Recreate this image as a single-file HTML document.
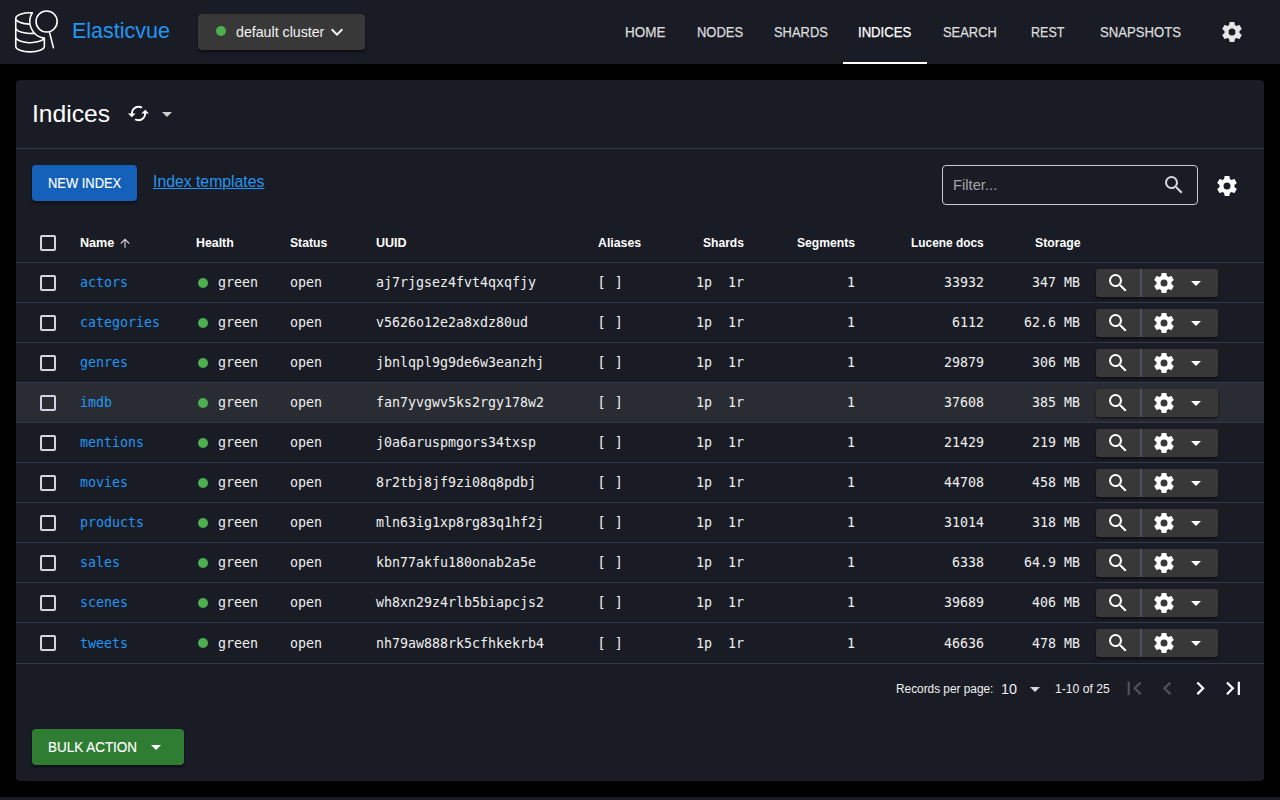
<!DOCTYPE html>
<html lang="en">
<head>
<meta charset="utf-8">
<title>Elasticvue</title>
<style>
*{box-sizing:border-box;margin:0;padding:0}
html,body{width:1280px;height:800px;overflow:hidden;background:#000;}
body{font-family:"Liberation Sans",sans-serif;color:#fff;position:relative;font-size:14px;}
svg{display:block}
.abs{position:absolute}
.tx{position:absolute;white-space:nowrap;transform-origin:0 50%}
.mono{font-family:"DejaVu Sans Mono","Liberation Mono",monospace;font-size:13.3px;}
#bar{position:absolute;left:0;top:0;width:1280px;height:64px;background:#1a1c25;}
#cluster{position:absolute;left:198px;top:14px;width:167px;height:36px;background:#383838;border-radius:4px;box-shadow:0 2px 3px rgba(0,0,0,.5);}
#cluster .dot{position:absolute;left:18px;top:12px;width:10px;height:10px;border-radius:50%;background:#4caf50}
#card{position:absolute;left:16px;top:80px;width:1248px;height:701px;background:#1a1c25;border-radius:4px;}
#footer{position:absolute;left:0;top:797px;width:1280px;height:3px;background:#1a1c25}
.hr{position:absolute;left:16px;width:1248px;height:1px;background:#32374a}
#newidx{position:absolute;left:32px;top:165px;width:105px;height:36px;background:#1561b9;border-radius:4px;box-shadow:0 2px 3px rgba(0,0,0,.5)}
#filter{position:absolute;left:942px;top:165px;width:256px;height:40px;border:1px solid #c6c9d9;border-radius:4px;}
.row{position:absolute;left:16px;width:1248px;height:40px;border-top:1px solid #32374a}
.row span{position:absolute;top:11px;line-height:18px;white-space:nowrap;color:#f0f0f0}
.row .nm{left:64px;color:#2196f3}
.row .hd{left:182px;top:14.5px;width:10px;height:10px;border-radius:50%;background:#4caf50}
.row .hl{left:202px}
.row .st{left:274px}
.row .uu{left:360px}
.row .al{left:581.5px;letter-spacing:0.6px}
.row .sh{right:520px;white-space:pre}
.row .sg{right:409px}
.row .ld{right:280px}
.row .sz{right:184px}
.row .cb{left:24px;top:12px;width:16px;height:16px;border:2px solid #d2d4e3;border-radius:2px}
.row .bt{left:1080px;top:6px;width:122px;height:28px;background:#383838;border-radius:3px;box-shadow:0 2px 3px rgba(0,0,0,.45)}
.row .bt i{position:absolute;left:44px;top:0;width:2px;height:28px;background:#4d5364}
.row .bt svg{position:absolute}
.hov{background:#2a2c34}
.last .nm,.last .hl,.last .st,.last .uu,.last .al,.last .sh,.last .sg,.last .ld,.last .sz{top:12px}
#bulk{position:absolute;left:32px;top:729px;width:152px;height:36px;background:#2e7d32;border-radius:4px;box-shadow:0 2px 3px rgba(0,0,0,.5)}
</style>
</head>
<body>
<div id="bar">
<svg class="abs" style="left:0;top:0" width="64" height="64" viewBox="0 0 64 64" fill="none" stroke="#fff" stroke-width="1.6" stroke-linecap="round" stroke-linejoin="round">
<path d="M30.01 24.10 A14.3 5.7 0 1 1 32.25 12.77 M32.25 12.77 A16.8 16.8 0 0 0 44.35 38.15 M15.75 27.70 A14.3 5.7 0 0 0 34.47 33.12 M15.75 37.00 A14.3 5.7 0 0 0 44.08 38.11 M15.75 18.40 V46.20 A14.3 5.7 0 0 0 44.35 46.20 V38.15"/>
<circle cx="46.6" cy="21.5" r="10.55"/>
<path d="M49.4 31.9 L53.4 47.6"/>
</svg>
<div class="tx" style="left:72.46px;top:16.58px;font-size:21.4px;line-height:28px;color:#2196f3;transform:scaleX(1.0046)">Elasticvue</div>
<div id="cluster"><div class="dot"></div><svg class="abs" style="left:127px;top:6px" width="24" height="24" viewBox="0 0 24 24" ><path fill="#f2f2f2" d="M7.41,8.58L12,13.17L16.59,8.58L18,10L12,16L6,10L7.41,8.58Z"/></svg></div>
<div class="tx" style="left:625.16px;top:23.15px;font-size:14px;line-height:18px;color:#dcdcde;-webkit-text-stroke:0.25px;transform:scaleX(0.9617)">HOME</div>
<div class="tx" style="left:696.69px;top:23.15px;font-size:14px;line-height:18px;color:#dcdcde;-webkit-text-stroke:0.25px;transform:scaleX(0.9256)">NODES</div>
<div class="tx" style="left:774.16px;top:23.15px;font-size:14px;line-height:18px;color:#dcdcde;-webkit-text-stroke:0.25px;transform:scaleX(0.9229)">SHARDS</div>
<div class="tx" style="left:857.52px;top:23.15px;font-size:14px;line-height:18px;color:#ffffff;-webkit-text-stroke:0.25px;transform:scaleX(0.9372)">INDICES</div>
<div class="tx" style="left:943.16px;top:23.15px;font-size:14px;line-height:18px;color:#dcdcde;-webkit-text-stroke:0.25px;transform:scaleX(0.9235)">SEARCH</div>
<div class="tx" style="left:1030.72px;top:23.15px;font-size:14px;line-height:18px;color:#dcdcde;-webkit-text-stroke:0.25px;transform:scaleX(0.8945)">REST</div>
<div class="tx" style="left:1100.14px;top:23.15px;font-size:14px;line-height:18px;color:#dcdcde;-webkit-text-stroke:0.25px;transform:scaleX(0.9378)">SNAPSHOTS</div>
<div class="tx" style="left:236.15px;top:23.15px;font-size:14.0px;line-height:18px;color:#f4f4f4;transform:scaleX(1.0133)">default cluster</div>
<div class="abs" style="left:843px;top:62px;width:84px;height:2px;background:#fff"></div>
<svg class="abs" style="left:1220px;top:20px" width="24" height="24" viewBox="0 0 24 24" ><path fill="#e6e6e6" d="M12,15.5A3.5,3.5 0 0,1 8.5,12A3.5,3.5 0 0,1 12,8.5A3.5,3.5 0 0,1 15.5,12A3.5,3.5 0 0,1 12,15.5M19.43,12.97C19.47,12.65 19.5,12.33 19.5,12C19.5,11.67 19.47,11.34 19.43,11L21.54,9.37C21.73,9.22 21.78,8.95 21.66,8.73L19.66,5.27C19.54,5.05 19.27,4.96 19.05,5.05L16.56,6.05C16.04,5.66 15.5,5.32 14.87,5.07L14.5,2.42C14.46,2.18 14.25,2 14,2H10C9.75,2 9.54,2.18 9.5,2.42L9.13,5.07C8.5,5.32 7.96,5.66 7.44,6.05L4.95,5.05C4.73,4.96 4.46,5.05 4.34,5.27L2.34,8.73C2.21,8.95 2.27,9.22 2.46,9.37L4.57,11C4.53,11.34 4.5,11.67 4.5,12C4.5,12.33 4.53,12.65 4.57,12.97L2.46,14.63C2.27,14.78 2.21,15.05 2.34,15.27L4.34,18.73C4.46,18.95 4.73,19.03 4.95,18.95L7.44,17.94C7.96,18.34 8.5,18.68 9.13,18.93L9.5,21.58C9.54,21.82 9.75,22 10,22H14C14.25,22 14.46,21.82 14.5,21.58L14.87,18.93C15.5,18.67 16.04,18.34 16.56,17.94L19.05,18.95C19.27,19.03 19.54,18.95 19.66,18.73L21.66,15.27C21.78,15.05 21.73,14.78 21.54,14.63L19.43,12.97Z"/></svg>
</div>
<div id="footer"></div>
<div id="card"></div>
<div class="tx" style="left:32.30px;top:98.89px;font-size:23.4px;line-height:30px;color:#ffffff;transform:scaleX(1.0540)">Indices</div>
<svg class="abs" style="left:126.7px;top:102.25px" width="23" height="23" viewBox="0 0 24 24" ><path fill="#fff" d="M19,8L15,12H18A6,6 0 0,1 12,18C11,18 10.03,17.75 9.2,17.3L7.74,18.76C8.97,19.54 10.43,20 12,20A8,8 0 0,0 20,12H23M6,12A6,6 0 0,1 12,6C13,6 13.97,6.25 14.8,6.7L16.26,5.24C15.03,4.46 13.57,4 12,4A8,8 0 0,0 4,12H1L5,16L9,12"/></svg>
<svg class="abs" style="left:155px;top:102px" width="24" height="24" viewBox="0 0 24 24" ><path fill="#cfcfd2" d="M7,10L12,15L17,10H7Z"/></svg>
<div class="hr" style="top:148px"></div>
<div id="newidx"></div>
<div class="tx" style="left:48.09px;top:174.15px;font-size:14px;line-height:18px;color:#ffffff;-webkit-text-stroke:0.15px;transform:scaleX(0.9229)">NEW INDEX</div>
<div class="tx" style="left:152.67px;top:170.96px;font-size:16px;line-height:21px;color:#2196f3;text-decoration:underline;transform:scaleX(0.9860)">Index templates</div>
<div id="filter"><svg class="abs" style="left:218.5px;top:6.5px" width="24" height="24" viewBox="0 0 24 24" ><path fill="#d8d8dc" d="M9.5,3A6.5,6.5 0 0,1 16,9.5C16,11.11 15.41,12.59 14.44,13.73L14.71,14H15.5L20.5,19L19,20.5L14,15.5V14.71L13.73,14.44C12.59,15.41 11.11,16 9.5,16A6.5,6.5 0 0,1 3,9.5A6.5,6.5 0 0,1 9.5,3M9.5,5C7,5 5,7 5,9.5C5,12 7,14 9.5,14C12,14 14,12 14,9.5C14,7 12,5 9.5,5Z"/></svg></div>
<svg class="abs" style="left:1215px;top:174px" width="24" height="24" viewBox="0 0 24 24" ><path fill="#fff" d="M12,15.5A3.5,3.5 0 0,1 8.5,12A3.5,3.5 0 0,1 12,8.5A3.5,3.5 0 0,1 15.5,12A3.5,3.5 0 0,1 12,15.5M19.43,12.97C19.47,12.65 19.5,12.33 19.5,12C19.5,11.67 19.47,11.34 19.43,11L21.54,9.37C21.73,9.22 21.78,8.95 21.66,8.73L19.66,5.27C19.54,5.05 19.27,4.96 19.05,5.05L16.56,6.05C16.04,5.66 15.5,5.32 14.87,5.07L14.5,2.42C14.46,2.18 14.25,2 14,2H10C9.75,2 9.54,2.18 9.5,2.42L9.13,5.07C8.5,5.32 7.96,5.66 7.44,6.05L4.95,5.05C4.73,4.96 4.46,5.05 4.34,5.27L2.34,8.73C2.21,8.95 2.27,9.22 2.46,9.37L4.57,11C4.53,11.34 4.5,11.67 4.5,12C4.5,12.33 4.53,12.65 4.57,12.97L2.46,14.63C2.27,14.78 2.21,15.05 2.34,15.27L4.34,18.73C4.46,18.95 4.73,19.03 4.95,18.95L7.44,17.94C7.96,18.34 8.5,18.68 9.13,18.93L9.5,21.58C9.54,21.82 9.75,22 10,22H14C14.25,22 14.46,21.82 14.5,21.58L14.87,18.93C15.5,18.67 16.04,18.34 16.56,17.94L19.05,18.95C19.27,19.03 19.54,18.95 19.66,18.73L21.66,15.27C21.78,15.05 21.73,14.78 21.54,14.63L19.43,12.97Z"/></svg>
<div class="tx" style="left:952.94px;top:176.15px;font-size:14.0px;line-height:18px;color:#a4a5aa;transform:scaleX(1.0536)">Filter...</div>
<div class="abs" style="left:40px;top:235px;width:16px;height:16px;border:2px solid #d2d4e3;border-radius:2px"></div>
<div class="tx" style="left:80.26px;top:234.84px;font-size:12px;line-height:16px;color:#ffffff;font-weight:bold;transform:scaleX(1.0502)">Name</div>
<div class="tx" style="left:195.64px;top:234.84px;font-size:12px;line-height:16px;color:#ffffff;font-weight:bold;transform:scaleX(1.0299)">Health</div>
<div class="tx" style="left:290.44px;top:234.84px;font-size:12px;line-height:16px;color:#ffffff;font-weight:bold;transform:scaleX(1.0137)">Status</div>
<div class="tx" style="left:376.01px;top:234.84px;font-size:12px;line-height:16px;color:#ffffff;font-weight:bold;transform:scaleX(1.0436)">UUID</div>
<div class="tx" style="left:598.32px;top:234.84px;font-size:12px;line-height:16px;color:#ffffff;font-weight:bold;transform:scaleX(1.0254)">Aliases</div>
<div class="tx" style="left:703.44px;top:234.84px;font-size:12px;line-height:16px;color:#ffffff;font-weight:bold;transform:scaleX(1.0066)">Shards</div>
<div class="tx" style="left:797.44px;top:234.84px;font-size:12px;line-height:16px;color:#ffffff;font-weight:bold;transform:scaleX(1.0116)">Segments</div>
<div class="tx" style="left:910.70px;top:234.84px;font-size:12px;line-height:16px;color:#ffffff;font-weight:bold;transform:scaleX(0.9906)">Lucene docs</div>
<div class="tx" style="left:1035.43px;top:234.84px;font-size:12px;line-height:16px;color:#ffffff;font-weight:bold;transform:scaleX(1.0207)">Storage</div>
<svg class="abs" style="left:118px;top:236px" width="14" height="14" viewBox="0 0 24 24" ><path fill="#d0d0d4" d="M13,20H11V8L5.5,13.5L4.08,12.08L12,4.16L19.92,12.08L18.5,13.5L13,8V20Z"/></svg>
<div class="row mono" style="top:262px"><span class="cb"></span><span class="nm">actors</span><span class="hd"></span><span class="hl">green</span><span class="st">open</span><span class="uu">aj7rjgsez4fvt4qxqfjy</span><span class="al">[ ]</span><span class="sh">1p  1r</span><span class="sg">1</span><span class="ld">33932</span><span class="sz">347 MB</span><span class="bt"><svg class="abs" style="left:10px;top:2px" width="24" height="24" viewBox="0 0 24 24" ><path fill="#fff" d="M9.5,3A6.5,6.5 0 0,1 16,9.5C16,11.11 15.41,12.59 14.44,13.73L14.71,14H15.5L20.5,19L19,20.5L14,15.5V14.71L13.73,14.44C12.59,15.41 11.11,16 9.5,16A6.5,6.5 0 0,1 3,9.5A6.5,6.5 0 0,1 9.5,3M9.5,5C7,5 5,7 5,9.5C5,12 7,14 9.5,14C12,14 14,12 14,9.5C14,7 12,5 9.5,5Z"/></svg><i></i><svg class="abs" style="left:56px;top:2px" width="24" height="24" viewBox="0 0 24 24" ><path fill="#fff" d="M12,15.5A3.5,3.5 0 0,1 8.5,12A3.5,3.5 0 0,1 12,8.5A3.5,3.5 0 0,1 15.5,12A3.5,3.5 0 0,1 12,15.5M19.43,12.97C19.47,12.65 19.5,12.33 19.5,12C19.5,11.67 19.47,11.34 19.43,11L21.54,9.37C21.73,9.22 21.78,8.95 21.66,8.73L19.66,5.27C19.54,5.05 19.27,4.96 19.05,5.05L16.56,6.05C16.04,5.66 15.5,5.32 14.87,5.07L14.5,2.42C14.46,2.18 14.25,2 14,2H10C9.75,2 9.54,2.18 9.5,2.42L9.13,5.07C8.5,5.32 7.96,5.66 7.44,6.05L4.95,5.05C4.73,4.96 4.46,5.05 4.34,5.27L2.34,8.73C2.21,8.95 2.27,9.22 2.46,9.37L4.57,11C4.53,11.34 4.5,11.67 4.5,12C4.5,12.33 4.53,12.65 4.57,12.97L2.46,14.63C2.27,14.78 2.21,15.05 2.34,15.27L4.34,18.73C4.46,18.95 4.73,19.03 4.95,18.95L7.44,17.94C7.96,18.34 8.5,18.68 9.13,18.93L9.5,21.58C9.54,21.82 9.75,22 10,22H14C14.25,22 14.46,21.82 14.5,21.58L14.87,18.93C15.5,18.67 16.04,18.34 16.56,17.94L19.05,18.95C19.27,19.03 19.54,18.95 19.66,18.73L21.66,15.27C21.78,15.05 21.73,14.78 21.54,14.63L19.43,12.97Z"/></svg><svg class="abs" style="left:88px;top:2px" width="24" height="24" viewBox="0 0 24 24" ><path fill="#fff" d="M7,10L12,15L17,10H7Z"/></svg></span></div>
<div class="row mono" style="top:302px"><span class="cb"></span><span class="nm">categories</span><span class="hd"></span><span class="hl">green</span><span class="st">open</span><span class="uu">v5626o12e2a8xdz80ud</span><span class="al">[ ]</span><span class="sh">1p  1r</span><span class="sg">1</span><span class="ld">6112</span><span class="sz">62.6 MB</span><span class="bt"><svg class="abs" style="left:10px;top:2px" width="24" height="24" viewBox="0 0 24 24" ><path fill="#fff" d="M9.5,3A6.5,6.5 0 0,1 16,9.5C16,11.11 15.41,12.59 14.44,13.73L14.71,14H15.5L20.5,19L19,20.5L14,15.5V14.71L13.73,14.44C12.59,15.41 11.11,16 9.5,16A6.5,6.5 0 0,1 3,9.5A6.5,6.5 0 0,1 9.5,3M9.5,5C7,5 5,7 5,9.5C5,12 7,14 9.5,14C12,14 14,12 14,9.5C14,7 12,5 9.5,5Z"/></svg><i></i><svg class="abs" style="left:56px;top:2px" width="24" height="24" viewBox="0 0 24 24" ><path fill="#fff" d="M12,15.5A3.5,3.5 0 0,1 8.5,12A3.5,3.5 0 0,1 12,8.5A3.5,3.5 0 0,1 15.5,12A3.5,3.5 0 0,1 12,15.5M19.43,12.97C19.47,12.65 19.5,12.33 19.5,12C19.5,11.67 19.47,11.34 19.43,11L21.54,9.37C21.73,9.22 21.78,8.95 21.66,8.73L19.66,5.27C19.54,5.05 19.27,4.96 19.05,5.05L16.56,6.05C16.04,5.66 15.5,5.32 14.87,5.07L14.5,2.42C14.46,2.18 14.25,2 14,2H10C9.75,2 9.54,2.18 9.5,2.42L9.13,5.07C8.5,5.32 7.96,5.66 7.44,6.05L4.95,5.05C4.73,4.96 4.46,5.05 4.34,5.27L2.34,8.73C2.21,8.95 2.27,9.22 2.46,9.37L4.57,11C4.53,11.34 4.5,11.67 4.5,12C4.5,12.33 4.53,12.65 4.57,12.97L2.46,14.63C2.27,14.78 2.21,15.05 2.34,15.27L4.34,18.73C4.46,18.95 4.73,19.03 4.95,18.95L7.44,17.94C7.96,18.34 8.5,18.68 9.13,18.93L9.5,21.58C9.54,21.82 9.75,22 10,22H14C14.25,22 14.46,21.82 14.5,21.58L14.87,18.93C15.5,18.67 16.04,18.34 16.56,17.94L19.05,18.95C19.27,19.03 19.54,18.95 19.66,18.73L21.66,15.27C21.78,15.05 21.73,14.78 21.54,14.63L19.43,12.97Z"/></svg><svg class="abs" style="left:88px;top:2px" width="24" height="24" viewBox="0 0 24 24" ><path fill="#fff" d="M7,10L12,15L17,10H7Z"/></svg></span></div>
<div class="row mono" style="top:342px"><span class="cb"></span><span class="nm">genres</span><span class="hd"></span><span class="hl">green</span><span class="st">open</span><span class="uu">jbnlqpl9g9de6w3eanzhj</span><span class="al">[ ]</span><span class="sh">1p  1r</span><span class="sg">1</span><span class="ld">29879</span><span class="sz">306 MB</span><span class="bt"><svg class="abs" style="left:10px;top:2px" width="24" height="24" viewBox="0 0 24 24" ><path fill="#fff" d="M9.5,3A6.5,6.5 0 0,1 16,9.5C16,11.11 15.41,12.59 14.44,13.73L14.71,14H15.5L20.5,19L19,20.5L14,15.5V14.71L13.73,14.44C12.59,15.41 11.11,16 9.5,16A6.5,6.5 0 0,1 3,9.5A6.5,6.5 0 0,1 9.5,3M9.5,5C7,5 5,7 5,9.5C5,12 7,14 9.5,14C12,14 14,12 14,9.5C14,7 12,5 9.5,5Z"/></svg><i></i><svg class="abs" style="left:56px;top:2px" width="24" height="24" viewBox="0 0 24 24" ><path fill="#fff" d="M12,15.5A3.5,3.5 0 0,1 8.5,12A3.5,3.5 0 0,1 12,8.5A3.5,3.5 0 0,1 15.5,12A3.5,3.5 0 0,1 12,15.5M19.43,12.97C19.47,12.65 19.5,12.33 19.5,12C19.5,11.67 19.47,11.34 19.43,11L21.54,9.37C21.73,9.22 21.78,8.95 21.66,8.73L19.66,5.27C19.54,5.05 19.27,4.96 19.05,5.05L16.56,6.05C16.04,5.66 15.5,5.32 14.87,5.07L14.5,2.42C14.46,2.18 14.25,2 14,2H10C9.75,2 9.54,2.18 9.5,2.42L9.13,5.07C8.5,5.32 7.96,5.66 7.44,6.05L4.95,5.05C4.73,4.96 4.46,5.05 4.34,5.27L2.34,8.73C2.21,8.95 2.27,9.22 2.46,9.37L4.57,11C4.53,11.34 4.5,11.67 4.5,12C4.5,12.33 4.53,12.65 4.57,12.97L2.46,14.63C2.27,14.78 2.21,15.05 2.34,15.27L4.34,18.73C4.46,18.95 4.73,19.03 4.95,18.95L7.44,17.94C7.96,18.34 8.5,18.68 9.13,18.93L9.5,21.58C9.54,21.82 9.75,22 10,22H14C14.25,22 14.46,21.82 14.5,21.58L14.87,18.93C15.5,18.67 16.04,18.34 16.56,17.94L19.05,18.95C19.27,19.03 19.54,18.95 19.66,18.73L21.66,15.27C21.78,15.05 21.73,14.78 21.54,14.63L19.43,12.97Z"/></svg><svg class="abs" style="left:88px;top:2px" width="24" height="24" viewBox="0 0 24 24" ><path fill="#fff" d="M7,10L12,15L17,10H7Z"/></svg></span></div>
<div class="row hov mono" style="top:382px"><span class="cb"></span><span class="nm">imdb</span><span class="hd"></span><span class="hl">green</span><span class="st">open</span><span class="uu">fan7yvgwv5ks2rgy178w2</span><span class="al">[ ]</span><span class="sh">1p  1r</span><span class="sg">1</span><span class="ld">37608</span><span class="sz">385 MB</span><span class="bt"><svg class="abs" style="left:10px;top:2px" width="24" height="24" viewBox="0 0 24 24" ><path fill="#fff" d="M9.5,3A6.5,6.5 0 0,1 16,9.5C16,11.11 15.41,12.59 14.44,13.73L14.71,14H15.5L20.5,19L19,20.5L14,15.5V14.71L13.73,14.44C12.59,15.41 11.11,16 9.5,16A6.5,6.5 0 0,1 3,9.5A6.5,6.5 0 0,1 9.5,3M9.5,5C7,5 5,7 5,9.5C5,12 7,14 9.5,14C12,14 14,12 14,9.5C14,7 12,5 9.5,5Z"/></svg><i></i><svg class="abs" style="left:56px;top:2px" width="24" height="24" viewBox="0 0 24 24" ><path fill="#fff" d="M12,15.5A3.5,3.5 0 0,1 8.5,12A3.5,3.5 0 0,1 12,8.5A3.5,3.5 0 0,1 15.5,12A3.5,3.5 0 0,1 12,15.5M19.43,12.97C19.47,12.65 19.5,12.33 19.5,12C19.5,11.67 19.47,11.34 19.43,11L21.54,9.37C21.73,9.22 21.78,8.95 21.66,8.73L19.66,5.27C19.54,5.05 19.27,4.96 19.05,5.05L16.56,6.05C16.04,5.66 15.5,5.32 14.87,5.07L14.5,2.42C14.46,2.18 14.25,2 14,2H10C9.75,2 9.54,2.18 9.5,2.42L9.13,5.07C8.5,5.32 7.96,5.66 7.44,6.05L4.95,5.05C4.73,4.96 4.46,5.05 4.34,5.27L2.34,8.73C2.21,8.95 2.27,9.22 2.46,9.37L4.57,11C4.53,11.34 4.5,11.67 4.5,12C4.5,12.33 4.53,12.65 4.57,12.97L2.46,14.63C2.27,14.78 2.21,15.05 2.34,15.27L4.34,18.73C4.46,18.95 4.73,19.03 4.95,18.95L7.44,17.94C7.96,18.34 8.5,18.68 9.13,18.93L9.5,21.58C9.54,21.82 9.75,22 10,22H14C14.25,22 14.46,21.82 14.5,21.58L14.87,18.93C15.5,18.67 16.04,18.34 16.56,17.94L19.05,18.95C19.27,19.03 19.54,18.95 19.66,18.73L21.66,15.27C21.78,15.05 21.73,14.78 21.54,14.63L19.43,12.97Z"/></svg><svg class="abs" style="left:88px;top:2px" width="24" height="24" viewBox="0 0 24 24" ><path fill="#fff" d="M7,10L12,15L17,10H7Z"/></svg></span></div>
<div class="row mono" style="top:422px"><span class="cb"></span><span class="nm">mentions</span><span class="hd"></span><span class="hl">green</span><span class="st">open</span><span class="uu">j0a6aruspmgors34txsp</span><span class="al">[ ]</span><span class="sh">1p  1r</span><span class="sg">1</span><span class="ld">21429</span><span class="sz">219 MB</span><span class="bt"><svg class="abs" style="left:10px;top:2px" width="24" height="24" viewBox="0 0 24 24" ><path fill="#fff" d="M9.5,3A6.5,6.5 0 0,1 16,9.5C16,11.11 15.41,12.59 14.44,13.73L14.71,14H15.5L20.5,19L19,20.5L14,15.5V14.71L13.73,14.44C12.59,15.41 11.11,16 9.5,16A6.5,6.5 0 0,1 3,9.5A6.5,6.5 0 0,1 9.5,3M9.5,5C7,5 5,7 5,9.5C5,12 7,14 9.5,14C12,14 14,12 14,9.5C14,7 12,5 9.5,5Z"/></svg><i></i><svg class="abs" style="left:56px;top:2px" width="24" height="24" viewBox="0 0 24 24" ><path fill="#fff" d="M12,15.5A3.5,3.5 0 0,1 8.5,12A3.5,3.5 0 0,1 12,8.5A3.5,3.5 0 0,1 15.5,12A3.5,3.5 0 0,1 12,15.5M19.43,12.97C19.47,12.65 19.5,12.33 19.5,12C19.5,11.67 19.47,11.34 19.43,11L21.54,9.37C21.73,9.22 21.78,8.95 21.66,8.73L19.66,5.27C19.54,5.05 19.27,4.96 19.05,5.05L16.56,6.05C16.04,5.66 15.5,5.32 14.87,5.07L14.5,2.42C14.46,2.18 14.25,2 14,2H10C9.75,2 9.54,2.18 9.5,2.42L9.13,5.07C8.5,5.32 7.96,5.66 7.44,6.05L4.95,5.05C4.73,4.96 4.46,5.05 4.34,5.27L2.34,8.73C2.21,8.95 2.27,9.22 2.46,9.37L4.57,11C4.53,11.34 4.5,11.67 4.5,12C4.5,12.33 4.53,12.65 4.57,12.97L2.46,14.63C2.27,14.78 2.21,15.05 2.34,15.27L4.34,18.73C4.46,18.95 4.73,19.03 4.95,18.95L7.44,17.94C7.96,18.34 8.5,18.68 9.13,18.93L9.5,21.58C9.54,21.82 9.75,22 10,22H14C14.25,22 14.46,21.82 14.5,21.58L14.87,18.93C15.5,18.67 16.04,18.34 16.56,17.94L19.05,18.95C19.27,19.03 19.54,18.95 19.66,18.73L21.66,15.27C21.78,15.05 21.73,14.78 21.54,14.63L19.43,12.97Z"/></svg><svg class="abs" style="left:88px;top:2px" width="24" height="24" viewBox="0 0 24 24" ><path fill="#fff" d="M7,10L12,15L17,10H7Z"/></svg></span></div>
<div class="row mono" style="top:462px"><span class="cb"></span><span class="nm">movies</span><span class="hd"></span><span class="hl">green</span><span class="st">open</span><span class="uu">8r2tbj8jf9zi08q8pdbj</span><span class="al">[ ]</span><span class="sh">1p  1r</span><span class="sg">1</span><span class="ld">44708</span><span class="sz">458 MB</span><span class="bt"><svg class="abs" style="left:10px;top:2px" width="24" height="24" viewBox="0 0 24 24" ><path fill="#fff" d="M9.5,3A6.5,6.5 0 0,1 16,9.5C16,11.11 15.41,12.59 14.44,13.73L14.71,14H15.5L20.5,19L19,20.5L14,15.5V14.71L13.73,14.44C12.59,15.41 11.11,16 9.5,16A6.5,6.5 0 0,1 3,9.5A6.5,6.5 0 0,1 9.5,3M9.5,5C7,5 5,7 5,9.5C5,12 7,14 9.5,14C12,14 14,12 14,9.5C14,7 12,5 9.5,5Z"/></svg><i></i><svg class="abs" style="left:56px;top:2px" width="24" height="24" viewBox="0 0 24 24" ><path fill="#fff" d="M12,15.5A3.5,3.5 0 0,1 8.5,12A3.5,3.5 0 0,1 12,8.5A3.5,3.5 0 0,1 15.5,12A3.5,3.5 0 0,1 12,15.5M19.43,12.97C19.47,12.65 19.5,12.33 19.5,12C19.5,11.67 19.47,11.34 19.43,11L21.54,9.37C21.73,9.22 21.78,8.95 21.66,8.73L19.66,5.27C19.54,5.05 19.27,4.96 19.05,5.05L16.56,6.05C16.04,5.66 15.5,5.32 14.87,5.07L14.5,2.42C14.46,2.18 14.25,2 14,2H10C9.75,2 9.54,2.18 9.5,2.42L9.13,5.07C8.5,5.32 7.96,5.66 7.44,6.05L4.95,5.05C4.73,4.96 4.46,5.05 4.34,5.27L2.34,8.73C2.21,8.95 2.27,9.22 2.46,9.37L4.57,11C4.53,11.34 4.5,11.67 4.5,12C4.5,12.33 4.53,12.65 4.57,12.97L2.46,14.63C2.27,14.78 2.21,15.05 2.34,15.27L4.34,18.73C4.46,18.95 4.73,19.03 4.95,18.95L7.44,17.94C7.96,18.34 8.5,18.68 9.13,18.93L9.5,21.58C9.54,21.82 9.75,22 10,22H14C14.25,22 14.46,21.82 14.5,21.58L14.87,18.93C15.5,18.67 16.04,18.34 16.56,17.94L19.05,18.95C19.27,19.03 19.54,18.95 19.66,18.73L21.66,15.27C21.78,15.05 21.73,14.78 21.54,14.63L19.43,12.97Z"/></svg><svg class="abs" style="left:88px;top:2px" width="24" height="24" viewBox="0 0 24 24" ><path fill="#fff" d="M7,10L12,15L17,10H7Z"/></svg></span></div>
<div class="row mono" style="top:502px"><span class="cb"></span><span class="nm">products</span><span class="hd"></span><span class="hl">green</span><span class="st">open</span><span class="uu">mln63ig1xp8rg83q1hf2j</span><span class="al">[ ]</span><span class="sh">1p  1r</span><span class="sg">1</span><span class="ld">31014</span><span class="sz">318 MB</span><span class="bt"><svg class="abs" style="left:10px;top:2px" width="24" height="24" viewBox="0 0 24 24" ><path fill="#fff" d="M9.5,3A6.5,6.5 0 0,1 16,9.5C16,11.11 15.41,12.59 14.44,13.73L14.71,14H15.5L20.5,19L19,20.5L14,15.5V14.71L13.73,14.44C12.59,15.41 11.11,16 9.5,16A6.5,6.5 0 0,1 3,9.5A6.5,6.5 0 0,1 9.5,3M9.5,5C7,5 5,7 5,9.5C5,12 7,14 9.5,14C12,14 14,12 14,9.5C14,7 12,5 9.5,5Z"/></svg><i></i><svg class="abs" style="left:56px;top:2px" width="24" height="24" viewBox="0 0 24 24" ><path fill="#fff" d="M12,15.5A3.5,3.5 0 0,1 8.5,12A3.5,3.5 0 0,1 12,8.5A3.5,3.5 0 0,1 15.5,12A3.5,3.5 0 0,1 12,15.5M19.43,12.97C19.47,12.65 19.5,12.33 19.5,12C19.5,11.67 19.47,11.34 19.43,11L21.54,9.37C21.73,9.22 21.78,8.95 21.66,8.73L19.66,5.27C19.54,5.05 19.27,4.96 19.05,5.05L16.56,6.05C16.04,5.66 15.5,5.32 14.87,5.07L14.5,2.42C14.46,2.18 14.25,2 14,2H10C9.75,2 9.54,2.18 9.5,2.42L9.13,5.07C8.5,5.32 7.96,5.66 7.44,6.05L4.95,5.05C4.73,4.96 4.46,5.05 4.34,5.27L2.34,8.73C2.21,8.95 2.27,9.22 2.46,9.37L4.57,11C4.53,11.34 4.5,11.67 4.5,12C4.5,12.33 4.53,12.65 4.57,12.97L2.46,14.63C2.27,14.78 2.21,15.05 2.34,15.27L4.34,18.73C4.46,18.95 4.73,19.03 4.95,18.95L7.44,17.94C7.96,18.34 8.5,18.68 9.13,18.93L9.5,21.58C9.54,21.82 9.75,22 10,22H14C14.25,22 14.46,21.82 14.5,21.58L14.87,18.93C15.5,18.67 16.04,18.34 16.56,17.94L19.05,18.95C19.27,19.03 19.54,18.95 19.66,18.73L21.66,15.27C21.78,15.05 21.73,14.78 21.54,14.63L19.43,12.97Z"/></svg><svg class="abs" style="left:88px;top:2px" width="24" height="24" viewBox="0 0 24 24" ><path fill="#fff" d="M7,10L12,15L17,10H7Z"/></svg></span></div>
<div class="row mono" style="top:542px"><span class="cb"></span><span class="nm">sales</span><span class="hd"></span><span class="hl">green</span><span class="st">open</span><span class="uu">kbn77akfu180onab2a5e</span><span class="al">[ ]</span><span class="sh">1p  1r</span><span class="sg">1</span><span class="ld">6338</span><span class="sz">64.9 MB</span><span class="bt"><svg class="abs" style="left:10px;top:2px" width="24" height="24" viewBox="0 0 24 24" ><path fill="#fff" d="M9.5,3A6.5,6.5 0 0,1 16,9.5C16,11.11 15.41,12.59 14.44,13.73L14.71,14H15.5L20.5,19L19,20.5L14,15.5V14.71L13.73,14.44C12.59,15.41 11.11,16 9.5,16A6.5,6.5 0 0,1 3,9.5A6.5,6.5 0 0,1 9.5,3M9.5,5C7,5 5,7 5,9.5C5,12 7,14 9.5,14C12,14 14,12 14,9.5C14,7 12,5 9.5,5Z"/></svg><i></i><svg class="abs" style="left:56px;top:2px" width="24" height="24" viewBox="0 0 24 24" ><path fill="#fff" d="M12,15.5A3.5,3.5 0 0,1 8.5,12A3.5,3.5 0 0,1 12,8.5A3.5,3.5 0 0,1 15.5,12A3.5,3.5 0 0,1 12,15.5M19.43,12.97C19.47,12.65 19.5,12.33 19.5,12C19.5,11.67 19.47,11.34 19.43,11L21.54,9.37C21.73,9.22 21.78,8.95 21.66,8.73L19.66,5.27C19.54,5.05 19.27,4.96 19.05,5.05L16.56,6.05C16.04,5.66 15.5,5.32 14.87,5.07L14.5,2.42C14.46,2.18 14.25,2 14,2H10C9.75,2 9.54,2.18 9.5,2.42L9.13,5.07C8.5,5.32 7.96,5.66 7.44,6.05L4.95,5.05C4.73,4.96 4.46,5.05 4.34,5.27L2.34,8.73C2.21,8.95 2.27,9.22 2.46,9.37L4.57,11C4.53,11.34 4.5,11.67 4.5,12C4.5,12.33 4.53,12.65 4.57,12.97L2.46,14.63C2.27,14.78 2.21,15.05 2.34,15.27L4.34,18.73C4.46,18.95 4.73,19.03 4.95,18.95L7.44,17.94C7.96,18.34 8.5,18.68 9.13,18.93L9.5,21.58C9.54,21.82 9.75,22 10,22H14C14.25,22 14.46,21.82 14.5,21.58L14.87,18.93C15.5,18.67 16.04,18.34 16.56,17.94L19.05,18.95C19.27,19.03 19.54,18.95 19.66,18.73L21.66,15.27C21.78,15.05 21.73,14.78 21.54,14.63L19.43,12.97Z"/></svg><svg class="abs" style="left:88px;top:2px" width="24" height="24" viewBox="0 0 24 24" ><path fill="#fff" d="M7,10L12,15L17,10H7Z"/></svg></span></div>
<div class="row mono" style="top:582px"><span class="cb"></span><span class="nm">scenes</span><span class="hd"></span><span class="hl">green</span><span class="st">open</span><span class="uu">wh8xn29z4rlb5biapcjs2</span><span class="al">[ ]</span><span class="sh">1p  1r</span><span class="sg">1</span><span class="ld">39689</span><span class="sz">406 MB</span><span class="bt"><svg class="abs" style="left:10px;top:2px" width="24" height="24" viewBox="0 0 24 24" ><path fill="#fff" d="M9.5,3A6.5,6.5 0 0,1 16,9.5C16,11.11 15.41,12.59 14.44,13.73L14.71,14H15.5L20.5,19L19,20.5L14,15.5V14.71L13.73,14.44C12.59,15.41 11.11,16 9.5,16A6.5,6.5 0 0,1 3,9.5A6.5,6.5 0 0,1 9.5,3M9.5,5C7,5 5,7 5,9.5C5,12 7,14 9.5,14C12,14 14,12 14,9.5C14,7 12,5 9.5,5Z"/></svg><i></i><svg class="abs" style="left:56px;top:2px" width="24" height="24" viewBox="0 0 24 24" ><path fill="#fff" d="M12,15.5A3.5,3.5 0 0,1 8.5,12A3.5,3.5 0 0,1 12,8.5A3.5,3.5 0 0,1 15.5,12A3.5,3.5 0 0,1 12,15.5M19.43,12.97C19.47,12.65 19.5,12.33 19.5,12C19.5,11.67 19.47,11.34 19.43,11L21.54,9.37C21.73,9.22 21.78,8.95 21.66,8.73L19.66,5.27C19.54,5.05 19.27,4.96 19.05,5.05L16.56,6.05C16.04,5.66 15.5,5.32 14.87,5.07L14.5,2.42C14.46,2.18 14.25,2 14,2H10C9.75,2 9.54,2.18 9.5,2.42L9.13,5.07C8.5,5.32 7.96,5.66 7.44,6.05L4.95,5.05C4.73,4.96 4.46,5.05 4.34,5.27L2.34,8.73C2.21,8.95 2.27,9.22 2.46,9.37L4.57,11C4.53,11.34 4.5,11.67 4.5,12C4.5,12.33 4.53,12.65 4.57,12.97L2.46,14.63C2.27,14.78 2.21,15.05 2.34,15.27L4.34,18.73C4.46,18.95 4.73,19.03 4.95,18.95L7.44,17.94C7.96,18.34 8.5,18.68 9.13,18.93L9.5,21.58C9.54,21.82 9.75,22 10,22H14C14.25,22 14.46,21.82 14.5,21.58L14.87,18.93C15.5,18.67 16.04,18.34 16.56,17.94L19.05,18.95C19.27,19.03 19.54,18.95 19.66,18.73L21.66,15.27C21.78,15.05 21.73,14.78 21.54,14.63L19.43,12.97Z"/></svg><svg class="abs" style="left:88px;top:2px" width="24" height="24" viewBox="0 0 24 24" ><path fill="#fff" d="M7,10L12,15L17,10H7Z"/></svg></span></div>
<div class="row last mono" style="top:622px"><span class="cb"></span><span class="nm">tweets</span><span class="hd"></span><span class="hl">green</span><span class="st">open</span><span class="uu">nh79aw888rk5cfhkekrb4</span><span class="al">[ ]</span><span class="sh">1p  1r</span><span class="sg">1</span><span class="ld">46636</span><span class="sz">478 MB</span><span class="bt"><svg class="abs" style="left:10px;top:2px" width="24" height="24" viewBox="0 0 24 24" ><path fill="#fff" d="M9.5,3A6.5,6.5 0 0,1 16,9.5C16,11.11 15.41,12.59 14.44,13.73L14.71,14H15.5L20.5,19L19,20.5L14,15.5V14.71L13.73,14.44C12.59,15.41 11.11,16 9.5,16A6.5,6.5 0 0,1 3,9.5A6.5,6.5 0 0,1 9.5,3M9.5,5C7,5 5,7 5,9.5C5,12 7,14 9.5,14C12,14 14,12 14,9.5C14,7 12,5 9.5,5Z"/></svg><i></i><svg class="abs" style="left:56px;top:2px" width="24" height="24" viewBox="0 0 24 24" ><path fill="#fff" d="M12,15.5A3.5,3.5 0 0,1 8.5,12A3.5,3.5 0 0,1 12,8.5A3.5,3.5 0 0,1 15.5,12A3.5,3.5 0 0,1 12,15.5M19.43,12.97C19.47,12.65 19.5,12.33 19.5,12C19.5,11.67 19.47,11.34 19.43,11L21.54,9.37C21.73,9.22 21.78,8.95 21.66,8.73L19.66,5.27C19.54,5.05 19.27,4.96 19.05,5.05L16.56,6.05C16.04,5.66 15.5,5.32 14.87,5.07L14.5,2.42C14.46,2.18 14.25,2 14,2H10C9.75,2 9.54,2.18 9.5,2.42L9.13,5.07C8.5,5.32 7.96,5.66 7.44,6.05L4.95,5.05C4.73,4.96 4.46,5.05 4.34,5.27L2.34,8.73C2.21,8.95 2.27,9.22 2.46,9.37L4.57,11C4.53,11.34 4.5,11.67 4.5,12C4.5,12.33 4.53,12.65 4.57,12.97L2.46,14.63C2.27,14.78 2.21,15.05 2.34,15.27L4.34,18.73C4.46,18.95 4.73,19.03 4.95,18.95L7.44,17.94C7.96,18.34 8.5,18.68 9.13,18.93L9.5,21.58C9.54,21.82 9.75,22 10,22H14C14.25,22 14.46,21.82 14.5,21.58L14.87,18.93C15.5,18.67 16.04,18.34 16.56,17.94L19.05,18.95C19.27,19.03 19.54,18.95 19.66,18.73L21.66,15.27C21.78,15.05 21.73,14.78 21.54,14.63L19.43,12.97Z"/></svg><svg class="abs" style="left:88px;top:2px" width="24" height="24" viewBox="0 0 24 24" ><path fill="#fff" d="M7,10L12,15L17,10H7Z"/></svg></span></div>
<div class="hr" style="top:663px"></div>
<div class="tx" style="left:895.95px;top:680.84px;font-size:12px;line-height:16px;color:#f0f0f0;transform:scaleX(0.9864)">Records per page:</div>
<div class="tx" style="left:1000.60px;top:679.55px;font-size:14px;line-height:18px;color:#f0f0f0;transform:scaleX(1.0239)">10</div>
<svg class="abs" style="left:1023.1px;top:676.75px" width="24" height="24" viewBox="0 0 24 24" ><path fill="#d8d8dc" d="M7,10L12,15L17,10H7Z"/></svg>
<div class="tx" style="left:1055.14px;top:680.84px;font-size:12px;line-height:16px;color:#f0f0f0;transform:scaleX(1.0144)">1-10 of 25</div>
<svg class="abs" style="left:1120.8px;top:675.4px" width="26.6" height="26.6" viewBox="0 0 24 24" ><path fill="#515257" d="M18.41,16.59L13.82,12L18.41,7.41L17,6L11,12L17,18L18.41,16.59M6,6H8V18H6V6Z"/></svg>
<svg class="abs" style="left:1153.8px;top:675.4px" width="26.6" height="26.6" viewBox="0 0 24 24" ><path fill="#515257" d="M15.41,16.58L10.83,12L15.41,7.41L14,6L8,12L14,18L15.41,16.58Z"/></svg>
<svg class="abs" style="left:1186.8px;top:675.4px" width="26.6" height="26.6" viewBox="0 0 24 24" ><path fill="#fff" d="M8.59,16.58L13.17,12L8.59,7.41L10,6L16,12L10,18L8.59,16.58Z"/></svg>
<svg class="abs" style="left:1219.8px;top:675.4px" width="26.6" height="26.6" viewBox="0 0 24 24" ><path fill="#fff" d="M5.59,7.41L10.18,12L5.59,16.59L7,18L13,12L7,6L5.59,7.41M16,6H18V18H16V6Z"/></svg>
<div id="bulk"><svg class="abs" style="left:112px;top:6px" width="24" height="24" viewBox="0 0 24 24" ><path fill="#fff" d="M7,10L12,15L17,10H7Z"/></svg></div>
<div class="tx" style="left:47.90px;top:738.15px;font-size:14px;line-height:18px;color:#ffffff;-webkit-text-stroke:0.15px;transform:scaleX(0.9619)">BULK ACTION</div>
</body>
</html>
